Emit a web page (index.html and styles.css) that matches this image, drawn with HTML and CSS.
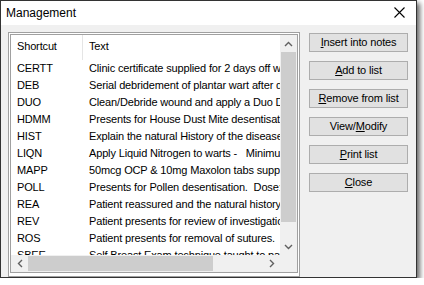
FILE: index.html
```html
<!DOCTYPE html>
<html lang="en">
<head>
<meta charset="utf-8">
<title>Management</title>
<link rel="stylesheet" href="styles.css">
</head>
<body>
<div class="window">
	<div class="titlebar">
		<span class="title">Management</span>
		<svg class="closex" width="11" height="11" viewBox="0 0 11 11"><path d="M0.5 0.5L10.5 10.5M10.5 0.5L0.5 10.5" stroke="#000" stroke-width="1.1" fill="none"/></svg>
	</div>
	<div class="dialogbody">
		<div class="listbox">
			<div class="listinner">
				<div class="listcontent">
					<div class="listhead">
						<div class="colshort hdrcell">Shortcut</div>
						<div class="coltext">Text</div>
					</div>
					<div class="row"><div class="colshort">CERTT</div><div class="coltext">Clinic certificate supplied for 2 days off work.</div></div>
					<div class="row"><div class="colshort">DEB</div><div class="coltext">Serial debridement of plantar wart after drying.</div></div>
					<div class="row"><div class="colshort">DUO</div><div class="coltext">Clean/Debride wound and apply a Duo Derm dressing.</div></div>
					<div class="row"><div class="colshort">HDMM</div><div class="coltext">Presents for House Dust Mite desentisation.</div></div>
					<div class="row"><div class="colshort">HIST</div><div class="coltext">Explain the natural History of the disease process.</div></div>
					<div class="row"><div class="colshort">LIQN</div><div class="coltext">Apply Liquid Nitrogen to warts -   Minimum of two cycles.</div></div>
					<div class="row"><div class="colshort">MAPP</div><div class="coltext">50mcg OCP &amp; 10mg Maxolon tabs supplied.</div></div>
					<div class="row"><div class="colshort">POLL</div><div class="coltext">Presents for Pollen desentisation.  Dose: </div></div>
					<div class="row"><div class="colshort">REA</div><div class="coltext">Patient reassured and the natural history explained.</div></div>
					<div class="row"><div class="colshort">REV</div><div class="coltext">Patient presents for review of investigations.</div></div>
					<div class="row"><div class="colshort">ROS</div><div class="coltext">Patient presents for removal of sutures.</div></div>
					<div class="row"><div class="colshort">SBEE</div><div class="coltext">Self Breast Exam technique taught to patient.</div></div>
				</div>
				<div class="vscroll">
					<div class="sbtn"><svg width="9" height="6" viewBox="0 0 9 6"><path d="M1 5L4.5 1.5L8 5" stroke="#606060" stroke-width="1.4" fill="none"/></svg></div>
					<div class="vthumb"></div>
					<div class="vtrack"></div>
					<div class="sbtn"><svg width="9" height="6" viewBox="0 0 9 6"><path d="M1 1L4.5 4.5L8 1" stroke="#606060" stroke-width="1.4" fill="none"/></svg></div>
				</div>
				<div class="hscroll">
					<div class="sbtn"><svg width="6" height="9" viewBox="0 0 6 9"><path d="M5 1L1.5 4.5L5 8" stroke="#606060" stroke-width="1.4" fill="none"/></svg></div>
					<div class="hthumb"></div>
					<div class="htrack"></div>
					<div class="sbtn"><svg width="6" height="9" viewBox="0 0 6 9"><path d="M1 1L4.5 4.5L1 8" stroke="#606060" stroke-width="1.4" fill="none"/></svg></div>
				</div>
				<div class="corner"></div>
			</div>
		</div>
		<div class="buttons">
			<div class="button"><u>I</u>nsert into notes</div>
			<div class="button"><u>A</u>dd to list</div>
			<div class="button"><u>R</u>emove from list</div>
			<div class="button">View/<u>M</u>odify</div>
			<div class="button"><u>P</u>rint list</div>
			<div class="button"><u>C</u>lose</div>
		</div>
	</div>
</div>
</body>
</html>
```

FILE: styles.css
```css
body {
	margin: 0;
	background: #fff;
	font-family: "Liberation Sans", Arial, sans-serif;
	font-size: 11px;
	letter-spacing: -0.15px;
	color: #000;
}
.window {
	width: 415px;
	height: 276px;
	border: 1px solid #333;
	background: #f0f0f0;
	box-shadow: 3px 3px 5px rgba(0, 0, 0, 0.6);
	display: flex;
	flex-direction: column;
}
.titlebar {
	height: 25px;
	background: #fff;
	display: flex;
	align-items: center;
	justify-content: space-between;
	padding: 0 11px 0 5px;
}
.title {
	font-size: 12px;
	letter-spacing: 0;
}
.closex {
	display: block;
	margin-top: -1px;
}
.dialogbody {
	display: flex;
	padding: 7px 0 0 7px;
	gap: 9px;
}
.listbox {
	width: 288px;
	height: 241px;
	border: 1px solid #a0a0a0;
	background: #fff;
	padding: 1px;
}
.listinner {
	height: 237px;
	border: 1px solid #a0a0a0;
	display: grid;
	grid-template-columns: 269px 17px;
	grid-template-rows: 220px 17px;
	overflow: hidden;
}
.listcontent {
	overflow: hidden;
}
.listhead {
	display: flex;
	height: 25px;
	line-height: 22px;
}
.row {
	display: flex;
	height: 17px;
	line-height: 17px;
}
.colshort {
	width: 66px;
	flex: none;
	padding-left: 6px;
}
.hdrcell {
	border-right: 1px solid #e5e5e5;
	width: 65px;
}
.coltext {
	padding-left: 6px;
	white-space: pre;
}
.vscroll {
	background: #f0f0f0;
	display: flex;
	flex-direction: column;
}
.vthumb {
	height: 170px;
	margin: 0 1px;
	background: #cdcdcd;
}
.vtrack {
	flex: 1;
}
.hscroll {
	background: #f0f0f0;
	display: flex;
}
.hthumb {
	width: 185px;
	margin: 1px 0;
	background: #cdcdcd;
}
.htrack {
	flex: 1;
}
.sbtn {
	width: 17px;
	height: 17px;
	flex: none;
	display: flex;
	align-items: center;
	justify-content: center;
}
.sbtn svg {
	display: block;
}
.corner {
	background: #f0f0f0;
}
.buttons {
	display: flex;
	flex-direction: column;
	gap: 9px;
	padding-top: 1px;
}
.button {
	width: 97px;
	height: 17px;
	border: 1px solid #adadad;
	background: #e1e1e1;
	text-align: center;
	line-height: 17px;
}
```
